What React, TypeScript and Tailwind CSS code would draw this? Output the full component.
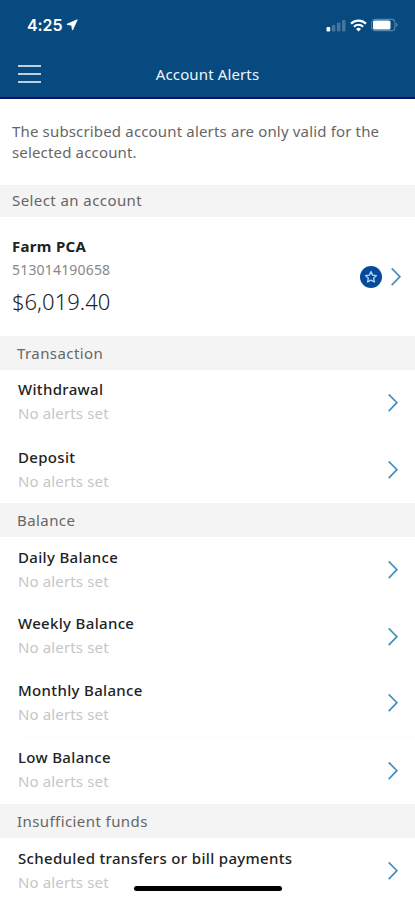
import { clsx } from 'clsx';

const sections = [
  {
    title: 'Transaction',
    alerts: ['Withdrawal', 'Deposit'],
  },
  {
    title: 'Balance',
    alerts: ['Daily Balance', 'Weekly Balance', 'Monthly Balance', 'Low Balance'],
  },
  {
    title: 'Insufficient funds',
    alerts: ['Scheduled transfers or bill payments'],
  },
];

const Chevron = () => (
  <svg className="h-[20px] w-[12px] shrink-0" viewBox="0 0 12 20" fill="none" stroke="#4391c1" strokeWidth="1.7">
    <path d="M1.7 1.3 9.9 9.7 1.7 18.1" />
  </svg>
);

const StatusBar = () => (
  <div className="flex h-[50px] items-center pl-[27px] pr-[16px] text-white">
    <span className="font-['Inter',sans-serif] text-[16px] font-semibold leading-5 tracking-[-0.1px]">4:25</span>
    <svg className="ml-[4px] h-[12px] w-[12px]" viewBox="0 0 12 12" fill="currentColor">
      <path
        d="M11.2.8.9 5.3l4.8.9.8 4.9z"
        stroke="currentColor"
        strokeWidth="0.9"
        strokeLinejoin="round"
      />
    </svg>
    <div className="ml-auto flex items-center">
      {/* Signal */}
      <svg className="h-[14px] w-[20px]" viewBox="0 0 20 14" fill="currentColor">
        <rect x="0.5" y="9" width="3.7" height="4.5" rx="1" />
        <g opacity="0.24">
          <rect x="5.8" y="7" width="3.5" height="6.5" rx="1" />
          <rect x="10.9" y="4.5" width="3.5" height="9" rx="1" />
          <rect x="16" y="2" width="3.5" height="11.5" rx="1" />
        </g>
      </svg>
      {/* Wifi */}
      <svg className="ml-[4px] h-[13px] w-[17px]" viewBox="0 0 17 13" fill="none" stroke="currentColor">
        <path d="M1 4.6a10.8 10.8 0 0 1 15 0" strokeWidth="2.2" />
        <path d="M3.9 7.7a6.6 6.6 0 0 1 9.2 0" strokeWidth="2" />
        <path d="M8.5 12.4 6 9.9a3.7 3.7 0 0 1 5 0z" fill="currentColor" stroke="none" />
      </svg>
      {/* Battery */}
      <svg className="ml-[4px] h-[14px] w-[28px]" viewBox="0 0 28 14" fill="none">
        <rect x="0.6" y="1.4" width="23.3" height="11.2" rx="3.2" stroke="#5188b3" strokeWidth="1.1" />
        <rect x="2" y="2.5" width="17.5" height="9" rx="1.6" fill="#fff" />
        <path d="M25.2 4.8c1.8.6 1.8 3.8 0 4.4z" fill="#5188b3" />
      </svg>
    </div>
  </div>
);

const SectionTitle = ({ title, first }: { title: string; first?: boolean }) => (
  <h2
    className={clsx(
      'flex shrink-0 items-center bg-[#f4f4f4] text-[15px] text-[#666]',
      first ? 'h-[32px] pb-[2px] pl-[12px] tracking-[0.42px]' : 'h-[33.75px] pl-[17px] tracking-[0.42px]'
    )}
  >
    {title}
  </h2>
);

const AlertRow = ({ name, last }: { name: string; last: boolean }) => (
  <li className="flex h-[66.75px] pl-[18px]">
    <button
      className={clsx(
        'flex flex-1 items-center justify-between pr-[16px] text-left',
        !last && 'border-b border-[#fcfcfc]'
      )}
    >
      <span className="-mt-[1.4px]">
        <span className="block text-[15px] font-medium leading-[24px] tracking-[0.33px] text-[#222]">{name}</span>
        <span className="block text-[15px] leading-[25px] tracking-[0.14px] text-[#c6c6c6]">No alerts set</span>
      </span>
      <Chevron />
    </button>
  </li>
);

export default function App() {
  return (
    <div className="relative flex h-[900px] w-[415px] flex-col overflow-hidden bg-white font-['Noto_Sans',sans-serif]">
      <header className="h-[99px] shrink-0 border-b-2 border-[#09116b] bg-[#074a7f]">
        <StatusBar />
        <div className="grid h-[47px] grid-cols-[1fr_auto_1fr] items-center pl-[18px] pr-[18px]">
          <button aria-label="Menu" className="flex h-[18px] w-[23px] flex-col justify-between">
            <span className="h-[2px] w-full bg-[#bdd0e0]" />
            <span className="h-[2px] w-full bg-[#bdd0e0]" />
            <span className="h-[2px] w-full bg-[#bdd0e0]" />
          </button>
          <h1 className="pt-[2px] text-[15px] tracking-[0.13px] text-[#f0f5f9]">Account Alerts</h1>
        </div>
      </header>

      <p className="h-[86px] shrink-0 pl-[12px] pr-[20px] pt-[22px] text-[15px] leading-[21px] tracking-[0.16px] text-[#666]">
        The subscribed account alerts are only valid for the selected account.
      </p>

      <SectionTitle title="Select an account" first />

      {/* Selected account */}
      <button className="flex h-[119px] shrink-0 items-center pl-[12px] pr-[13px] text-left">
        <span className="flex-1">
          <span className="block text-[15px] font-bold leading-[24px] tracking-[0.3px] text-[#222]">Farm PCA</span>
          <span className="block text-[14px] leading-[24px] tracking-[0.18px] text-[#888]">513014190658</span>
          <span className="block pt-[1px] text-[22px] font-[350] leading-[37px] text-[#222]">$6,019.40</span>
        </span>
        <span className="mr-[8px] flex size-[22px] items-center justify-center rounded-full bg-[#064b9b]">
          <svg className="size-[14px]" viewBox="0 0 24 24" fill="none" stroke="#b7d8f4" strokeWidth="2.2" strokeLinejoin="round">
            <path d="m12 2.8 2.8 6 6.5.8-4.8 4.5 1.3 6.5-5.8-3.2-5.8 3.2 1.3-6.5-4.8-4.5 6.5-.8z" />
          </svg>
        </span>
        <Chevron />
      </button>

      {sections.map((section) => (
        <section key={section.title} className="shrink-0">
          <SectionTitle title={section.title} />
          <ul>
            {section.alerts.map((name, i) => (
              <AlertRow key={name} name={name} last={i === section.alerts.length - 1} />
            ))}
          </ul>
        </section>
      ))}

      {/* Home indicator */}
      <div className="absolute bottom-[9px] left-[134px] h-[5px] w-[148px] rounded-full bg-black" />
    </div>
  );
}
